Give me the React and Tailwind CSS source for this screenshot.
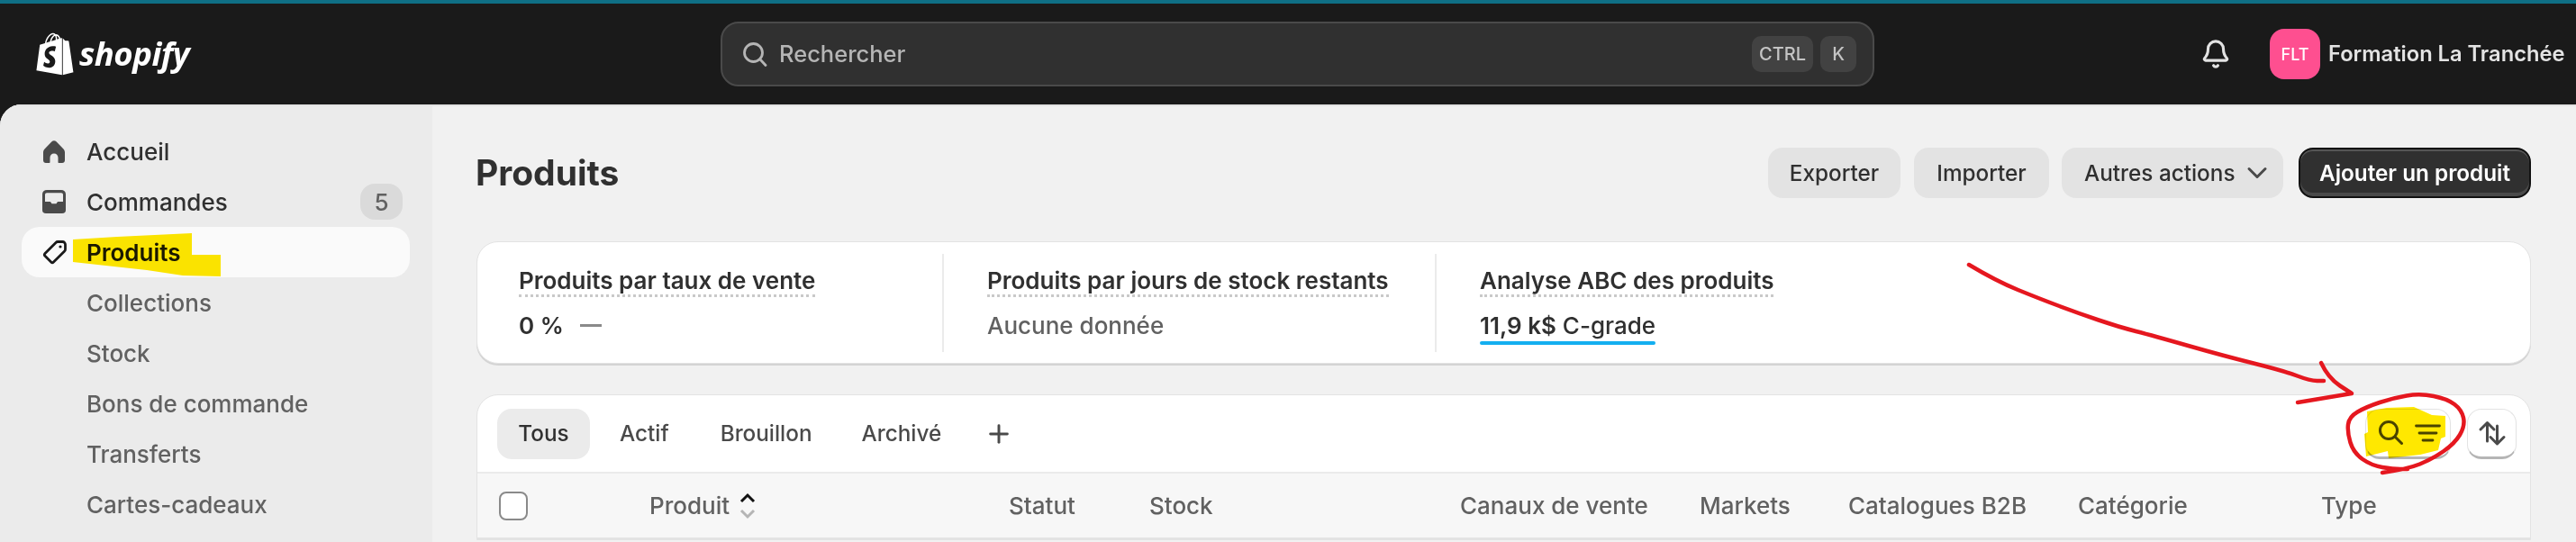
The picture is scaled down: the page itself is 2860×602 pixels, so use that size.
import React from "react";
import { FaShopify } from "react-icons/fa";
import { Bell, ChevronDown, Plus } from "lucide-react";

const font = { fontFamily: "Inter, 'Liberation Sans', sans-serif" };

function smooth(p) {
  let d = `M${p[0][0]} ${p[0][1]}`;
  for (let i = 1; i < p.length - 1; i++) {
    const mx = (p[i][0] + p[i + 1][0]) / 2;
    const my = (p[i][1] + p[i + 1][1]) / 2;
    d += `Q${p[i][0]} ${p[i][1]} ${mx} ${my}`;
  }
  const l = p[p.length - 1];
  return d + `L${l[0]} ${l[1]}`;
}

const arrow = [[2186, 294], [2216, 312], [2265, 332], [2308, 348], [2352, 363], [2391, 373], [2468, 395], [2536, 412], [2565, 423], [2580, 423]];
const head = [[2577, 403], [2585, 420], [2611, 437]];
const ring = [[2645, 525], [2673, 521], [2700, 510], [2725, 493], [2737, 473], [2733, 455], [2717, 443], [2687, 437], [2657, 442], [2627, 452], [2608, 463], [2606, 480], [2613, 503], [2633, 517], [2657, 521], [2673, 521]];

function NavIcon({ kind }) {
  if (kind === "home")
    return (
      <svg width="24" height="25" viewBox="0 0 24 25" fill="#4a4a4a">
        <path d="M9.500 1.200c1.400-1.200 3.600-1.200 5 0L22 9c1.300 1.300 2 2.500 2 4.500V22c0 1.700-1.300 3-3 3h-3.500c-.8 0-1-.5-1-1v-5c0-2.500-2-4.500-4.500-4.500S7.500 16.500 7.500 19v5c0 .5-.2 1-1 1H3c-1.700 0-3-1.300-3-3v-8.500C0 11.500.7 10.300 2 9z" />
      </svg>
    );
  if (kind === "inbox")
    return (
      <svg className="-ml-[1px]" width="26" height="26" viewBox="1 1 26 28" preserveAspectRatio="none" fill="#4a4a4a">
        <path fillRule="evenodd" d="M6 1h16a5 5 0 0 1 5 5v19a4 4 0 0 1-4 4H5a4 4 0 0 1-4-4V6a5 5 0 0 1 5-5zm0 3.500A2 2 0 0 0 4 6.500V15h5c1 0 1.500.6 2 1.500l.5 1h5l.5-1c.5-.9 1-1.500 2-1.500h5V6.500a2 2 0 0 0-2-2z" />
      </svg>
    );
  return (
    <svg className="-ml-[1px]" width="28" height="28" viewBox="0 0 28 28" fill="none" stroke="#1a1a1a" strokeWidth="2.800" strokeLinejoin="round">
      <path d="M17 2.500h5.500a3 3 0 0 1 3 3V11c0 .8-.3 1.500-.9 2L12.500 25a2 2 0 0 1-2.800 0L3 18.300a2 2 0 0 1 0-2.800L15 3.400c.6-.6 1.200-.9 2-.9z" />
      <circle cx="20" cy="8" r="1.600" fill="#1a1a1a" stroke="none" />
    </svg>
  );
}

function NavRow({ icon, label, active, badge }) {
  return (
    <div className={`flex h-[56px] items-center rounded-[20px] pl-[24px] pr-[8px] ${active ? "bg-[#fafafa] text-[#1a1a1a] font-semibold" : "text-[#303030] font-medium"}`}>
      <span className="flex w-[48px] shrink-0 items-center"><NavIcon kind={icon} /></span>
      <span className="flex-1">{label}</span>
      {badge && (
        <span className="flex h-[40px] w-[47px] items-center justify-center rounded-[16px] bg-[#dadada] text-[#616161]">{badge}</span>
      )}
    </div>
  );
}

function SubRow({ label }) {
  return <div className="flex h-[56px] items-center pl-[72px] text-[#616161] font-[450]">{label}</div>;
}

function Gray({ label, cls, children }) {
  return (
    <button className={`flex h-[56px] items-center rounded-[16px] bg-[#e3e3e3] text-[24.300px] text-[#303030] font-medium ${cls}`}>
      {label}
      {children}
    </button>
  );
}

function Metric({ title, children, cls }) {
  return (
    <div className={`flex h-[109px] flex-col ${cls}`}>
      <div className="mt-[9px] h-[39px] w-fit border-b-[3px] border-dotted border-[#c9c9c9] pt-[2px] font-semibold leading-[37px] text-[#303030]">{title}</div>
      <div className="mt-[13px] flex items-center leading-[38px]">{children}</div>
    </div>
  );
}

function Tab({ label, cls }) {
  return <div className={`flex h-[56px] items-center justify-center rounded-[16px] px-[24px] text-[24.300px] font-medium ${cls}`}>{label}</div>;
}

function HeadCell({ cls, children }) {
  return <div className={`shrink-0 font-medium text-[#616161] ${cls}`}>{children}</div>;
}

export default function App() {
  return (
    <div className="relative h-[602px] w-[2860px] overflow-hidden bg-[#1a1a1a] text-[26px]" style={font}>
      <div className="h-[4px] bg-[#0f6f85]" />
      <header className="flex h-[112px] items-center">
        <div className="flex w-[800px] shrink-0 items-center pl-[37px] text-white">
          <FaShopify size={48} />
          <span className="-mt-[2px] ml-[3px] text-[36.500px] font-bold italic leading-none tracking-[-0.500px]" style={{ fontFamily: "'Open Sans', sans-serif" }}>shopify</span>
        </div>
        <div className="flex h-[72px] w-[1281px] shrink-0 items-center rounded-[20px] border-2 border-[#4a4a4a] bg-[#303030] pl-[22px] pr-[18px] text-[#b5b5b5]">
          <svg width="28" height="28" viewBox="0 0 28 28" fill="none" stroke="currentColor" strokeWidth="2.800" strokeLinecap="round"><circle cx="12.500" cy="12.500" r="10" /><path d="M20 20l6 6.500" /></svg>
          <span className="ml-[13px] flex-1 text-[25.500px] font-[450]">Rechercher</span>
          <span className="flex h-[40px] w-[68px] items-center justify-center rounded-[10px] bg-[#424242] text-[20px] font-medium text-[#c4c4c4]">CTRL</span>
          <span className="ml-[8px] flex h-[40px] w-[40px] items-center justify-center rounded-[10px] bg-[#424242] text-[20px] font-medium text-[#c4c4c4]">K</span>
        </div>
        <div className="ml-[362px] flex w-[34px] shrink-0 justify-center text-[#e3e3e3]"><Bell size={34} strokeWidth={2.2} /></div>
        <div className="ml-[43px] flex h-[56px] w-[56px] shrink-0 items-center justify-center rounded-[16px] bg-[#fe4f90] text-[18px] font-medium text-white">FLT</div>
        <span className="ml-[9px] whitespace-nowrap text-[23.700px] font-semibold text-[#e3e3e3]">Formation La Tranchée</span>
      </header>
      <div className="flex h-[486px] overflow-hidden rounded-tl-[24px] bg-[#f1f1f1] shadow-[inset_0_2px_0_#e3e3e3]">
        <aside className="w-[480px] shrink-0 bg-[#ebebeb] pl-[24px] pr-[25px] pt-[24px] shadow-[inset_0_2px_0_#e3e3e3]">
          <NavRow icon="home" label="Accueil" />
          <NavRow icon="inbox" label="Commandes" badge="5" />
          <NavRow icon="tag" label="Produits" active />
          <SubRow label="Collections" />
          <SubRow label="Stock" />
          <SubRow label="Bons de commande" />
          <SubRow label="Transferts" />
          <SubRow label="Cartes-cadeaux" />
        </aside>
        <main className="w-[2330px] shrink-0 pl-[49px] pt-[48px]">
          <div className="flex h-[56px] items-center">
            <h1 className="-ml-[1px] flex-1 text-[39px] font-bold text-[#303030]">Produits</h1>
            <div className="flex">
              <Gray label="Exporter" cls="w-[147px] justify-center" />
              <Gray label="Importer" cls="ml-[15px] w-[150px] justify-center" />
              <Gray label="Autres actions" cls="ml-[14px] w-[246px] pl-[25px]"><ChevronDown size={36} strokeWidth={2} className="ml-[7px] text-[#4a4a4a]" /></Gray>
              <button className="ml-[17px] flex h-[56px] w-[258px] items-center justify-center rounded-[16px] border-2 border-[#111111] bg-[#303030] text-[24.300px] font-semibold text-white shadow-[inset_0_2px_0_#555555,inset_0_-4px_0_#4a4a4a]">Ajouter un produit</button>
            </div>
          </div>
          <section className="mt-[48px] flex h-[136px] items-center rounded-[24px] border border-[#e3e3e3] bg-white shadow-[0_2px_0_#d4d4d4]">
            <Metric title="Produits par taux de vente" cls="w-[518px] border-r-2 border-[#ebebeb] pl-[46px]">
              <span className="font-semibold text-[#303030]">0 %</span>
              <span className="ml-[18px] h-[3px] w-[24px] bg-[#8a8a8a]" />
            </Metric>
            <Metric title="Produits par jours de stock restants" cls="w-[547px] border-r-2 border-[#ebebeb] pl-[48px]">
              <span className="font-[450] text-[#616161]">Aucune donnée</span>
            </Metric>
            <Metric title="Analyse ABC des produits" cls="pl-[48px]">
              <span className="relative font-[450] text-[#303030]">
                <b className="font-semibold">11,9 k$</b> C-grade
                <span className="absolute -bottom-[2px] left-0 h-[4px] w-full rounded-full bg-[#13aff0]" />
              </span>
            </Metric>
          </section>
          <section className="mt-[34px] overflow-hidden rounded-t-[24px] border border-[#e3e3e3] bg-white">
            <div className="flex h-[87px] items-center border-b-2 border-[#ebebeb] pl-[22px] pr-[15px]">
              <Tab label="Tous" cls="w-[103px] bg-[#ebebeb] text-[#303030]" />
              <Tab label="Actif" cls="ml-[9px] text-[#4a4a4a]" />
              <Tab label="Brouillon" cls="ml-[9px] text-[#4a4a4a]" />
              <Tab label="Archivé" cls="ml-[7px] text-[#4a4a4a]" />
              <Plus size={32} strokeWidth={2.2} className="ml-[24px] text-[#4a4a4a]" />
              <div className="flex-1" />
              <button className="flex h-[56px] w-[95px] items-center justify-center gap-[13px] rounded-[16px] border border-[#e3e3e3] border-b-[3px] border-b-[#b5b5b5] pl-[3px] text-[#4a4a4a]">
                <svg width="27" height="27" viewBox="0 0 27 27" fill="none" stroke="currentColor" strokeWidth="3" strokeLinecap="round"><circle cx="11" cy="11" r="9.500" /><path d="M18 18l7.500 7.500" /></svg>
                <svg width="29" height="20" viewBox="0 0 29 20" fill="none" stroke="currentColor" strokeWidth="2.800" strokeLinecap="round"><path d="M1.500 2h26M5 10h19M9 18h11" /></svg>
              </button>
              <button className="ml-[18px] flex h-[56px] w-[55px] items-center justify-center rounded-[16px] border border-[#e3e3e3] border-b-[3px] border-b-[#b5b5b5] text-[#4a4a4a]">
                <svg width="32" height="32" viewBox="0 0 32 32" fill="none" stroke="currentColor" strokeWidth="3" strokeLinecap="round" strokeLinejoin="round"><path d="M10.500 25V5M3 12l7.500-7.500L18 12" /><path d="M21.500 8v20M14 20.500l7.500 7.500 7.500-7.500" /></svg>
              </button>
            </div>
            <div className="flex h-[73px] items-center border-b-2 border-[#e3e3e3] bg-[#f7f7f7] pl-[24px]">
              <span className="h-[32px] w-[32px] shrink-0 rounded-[8px] border-2 border-[#8a8a8a] bg-white" />
              <HeadCell cls="ml-[135px] flex w-[399px] items-center">
                Produit
                <svg className="ml-[10px]" width="20" height="32" viewBox="0 0 20 32" fill="none" strokeWidth="3">
                  <path d="M3 11 10 4l7 7" stroke="#111111" />
                  <path d="M3 21l7 7 7-7" stroke="#b5b5b5" />
                </svg>
              </HeadCell>
              <HeadCell cls="w-[156px]">Statut</HeadCell>
              <HeadCell cls="w-[345px]">Stock</HeadCell>
              <HeadCell cls="w-[266px]">Canaux de vente</HeadCell>
              <HeadCell cls="w-[165px]">Markets</HeadCell>
              <HeadCell cls="w-[255px]">Catalogues B2B</HeadCell>
              <HeadCell cls="w-[270px]">Catégorie</HeadCell>
              <HeadCell>Type</HeadCell>
            </div>
          </section>
        </main>
      </div>
      <svg className="pointer-events-none absolute left-0 top-0 mix-blend-multiply" width="2860" height="602" viewBox="0 0 2860 602">
        <path d="M81 266L130 263L213 259L213 283L245 283L245 307L203 306L163 300L81 291Z" fill="#ffe800" />
        <path d="M2628 457L2650 453L2680 452L2700 461L2715 462L2715 485L2710 487L2707 500L2687 505L2652 509L2651 501L2627 507L2625 482L2629 480Z" fill="#ffe800" />
      </svg>
      <svg className="pointer-events-none absolute left-0 top-0" width="2860" height="602" viewBox="0 0 2860 602" fill="none" stroke="#e5171f" strokeWidth="4.500" strokeLinecap="round" strokeLinejoin="round">
        <path d={smooth(arrow)} />
        <path d={smooth(head) + "L2551 447"} />
        <path d={smooth(ring)} />
      </svg>
    </div>
  );
}
